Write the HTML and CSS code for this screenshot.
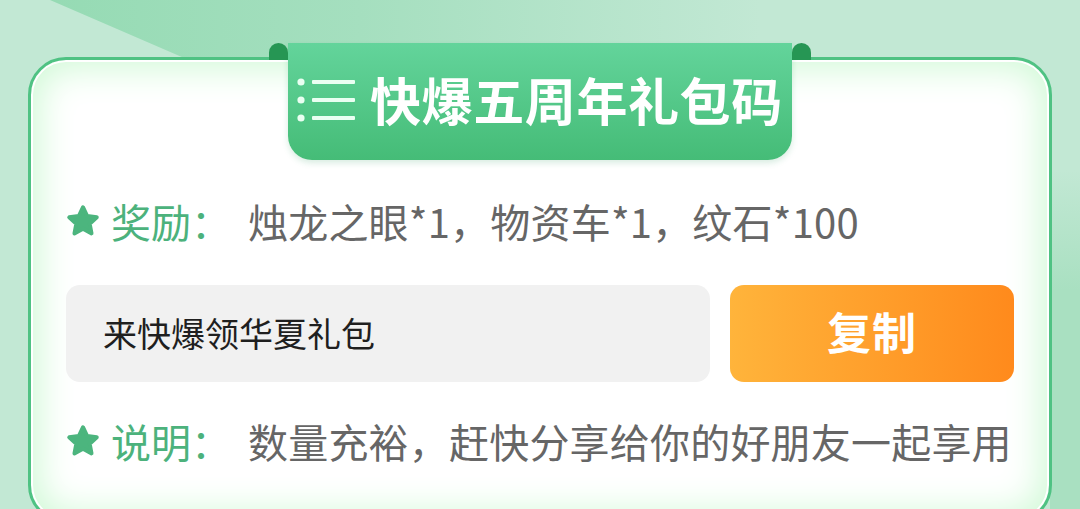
FILE: index.html
```html
<!DOCTYPE html>
<html lang="zh-CN">
<head>
<meta charset="utf-8">
<title>快爆五周年礼包码</title>
<link rel="stylesheet" href="styles.css">
</head>
<body>
<div class="page">
  <section class="card">
    <header class="tab">
      <svg class="tab-icon" viewBox="0 0 58 44" aria-hidden="true">
        <circle cx="4" cy="4" r="3.6"/>
        <circle cx="4" cy="22" r="3.6"/>
        <circle cx="4" cy="40" r="3.6"/>
        <rect x="15" y="2" width="43" height="4" rx="1"/>
        <rect x="15" y="20" width="43" height="4" rx="1"/>
        <rect x="15" y="38" width="43" height="4" rx="1"/>
      </svg>
      <h1 class="tab-title">快爆五周年礼包码</h1>
    </header>

    <div class="info-row reward">
      <svg class="star" viewBox="0 0 24 24" aria-hidden="true">
        <polygon points="12,2.8 14.8,8.7 21.2,9.5 16.5,13.9 17.7,20.3 12,17.2 6.3,20.3 7.5,13.9 2.8,9.5 9.2,8.7"/>
      </svg>
      <span class="label">奖励：</span>
      <span class="value">烛龙之眼*1，物资车*1，纹石*100</span>
    </div>

    <div class="code-row">
      <div class="code">来快爆领华夏礼包</div>
      <button class="copy" type="button">复制</button>
    </div>

    <div class="info-row note">
      <svg class="star" viewBox="0 0 24 24" aria-hidden="true">
        <polygon points="12,2.8 14.8,8.7 21.2,9.5 16.5,13.9 17.7,20.3 12,17.2 6.3,20.3 7.5,13.9 2.8,9.5 9.2,8.7"/>
      </svg>
      <span class="label">说明：</span>
      <span class="value">数量充裕，赶快分享给你的好朋友一起享用</span>
    </div>
  </section>
</div>
</body>
</html>
```

FILE: styles.css
```css
* {
  box-sizing: border-box;
}

html,
body {
  margin: 0;
  height: 100%;
}

body {
  position: relative;
  width: 1080px;
  height: 509px;
  overflow: hidden;
  font-family: "Noto Sans CJK SC", "Noto Sans", sans-serif;
  background:
    linear-gradient(to bottom, rgba(168, 224, 192, 0) 170px, #a9e0c1 290px) right top / 30px 100% no-repeat,
    #c2e8d4;
}

/* diagonal band across the top of the backdrop */
body::before {
  content: "";
  position: absolute;
  left: 0;
  top: 0;
  width: 1080px;
  height: 80px;
  clip-path: polygon(50px 0, 1080px 0, 1080px 80px, 235px 80px);
  background: linear-gradient(to right, #93dab2 0, #a5dfbf 360px, #c2e8d4 760px);
}

.page {
  position: relative;
  padding: 57px 28px 0;
}

.card {
  height: 466px;
  border: 3px solid #4fc283;
  border-radius: 38px;
  background: #fff;
  box-shadow:
    inset 0 0 0 2px #ffffff,
    inset 0 0 36px 8px #d0f9d6;
  padding: 0 35px;
}

/* ribbon title */
.tab {
  position: relative;
  width: 504px;
  height: 117px;
  margin: -17px auto 0;
  display: flex;
  align-items: center;
  gap: 15px;
  padding-left: 9px;
  padding-bottom: 4px;
  border-radius: 0 0 24px 24px;
  background: linear-gradient(to bottom, #63d49b, #45bc77);
  box-shadow: 0 3px 6px rgba(40, 150, 90, 0.18);
}

.tab::before,
.tab::after {
  content: "";
  position: absolute;
  top: 0;
  width: 19px;
  height: 17px;
  border-radius: 10px 10px 0 0;
  background: #269654;
}

.tab::before {
  left: -19px;
}

.tab::after {
  right: -19px;
}

.tab-icon {
  width: 58px;
  height: 44px;
  fill: #eafff2;
  flex: none;
}

.tab-title {
  margin: 0;
  font-size: 51px;
  font-weight: 700;
  color: #fff;
  line-height: 1;
  letter-spacing: 0.6px;
}

/* reward / note rows */
.info-row {
  display: flex;
  align-items: center;
  height: 60px;
  font-size: 40px;
  line-height: 1;
}

.reward {
  margin-top: 31px;
}

.note {
  margin-top: 29px;
}

.star {
  width: 36px;
  height: 36px;
  margin-left: -1px;
  margin-right: 10px;
  fill: #4cb57e;
  stroke: #4cb57e;
  stroke-width: 2.6;
  stroke-linejoin: round;
  flex: none;
}

.label {
  color: #4cb27c;
  width: 137px;
  flex: none;
}

.value {
  color: #666;
  white-space: nowrap;
  letter-spacing: 0.2px;
}

/* code + copy button */
.code-row {
  display: flex;
  gap: 20px;
  height: 97px;
  margin-top: 34px;
}

.code {
  flex: 1;
  display: flex;
  align-items: center;
  padding-left: 37px;
  padding-bottom: 2px;
  border-radius: 14px;
  background: #f1f1f1;
  color: #1f1f1f;
  font-size: 34px;
}

.copy {
  width: 284px;
  flex: none;
  border: 0;
  border-radius: 14px;
  background: linear-gradient(to right, #ffb43b, #ff8a1c);
  color: #fff;
  font-family: inherit;
  font-size: 44px;
  font-weight: 700;
  padding: 0 0 6px;
  letter-spacing: 1px;
}
```
